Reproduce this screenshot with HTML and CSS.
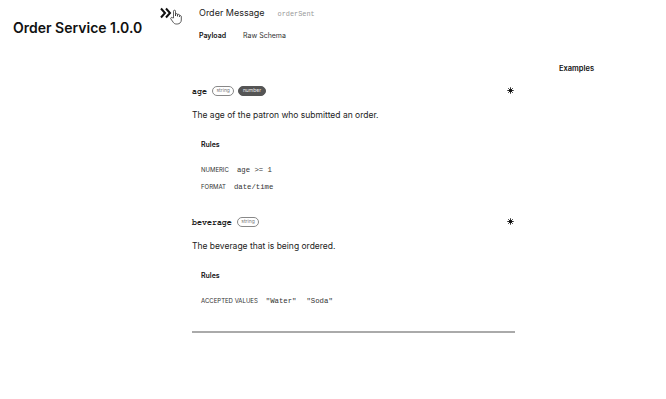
FILE: index.html
```html
<!DOCTYPE html>
<html>
<head>
<meta charset="utf-8">
<link rel="stylesheet" href="styles.css">
</head>
<body>
<div class="app">
  <aside class="sidebar">
    <h1 class="service-title">Order Service 1.0.0</h1>
  </aside>
  <main class="main">
    <div class="top">
      <div class="toggle">
        <svg width="13" height="12" viewBox="0 0 13 12" class="chev">
          <path d="M1 1.5 L5 6 L1 10.5 M6 1.5 L10 6 L6 10.5" fill="none" stroke="#111" stroke-width="2"/>
        </svg>
        <svg width="12" height="16" viewBox="0 0 12 16" class="hand">
          <path d="M3.5 9 V2.2 a1 1 0 0 1 2 0 V7 V5.6 a1 1 0 0 1 2 0 V7.3 V6.3 a1 1 0 0 1 2 0 V7.8 V7.2 a1 1 0 0 1 1.8 0 V11 c0 2.2 -1.6 4 -4 4 H6.2 c-1.3 0 -2.2 -0.6 -2.9 -1.6 L0.9 10 a1 1 0 0 1 1.5 -1.3 Z" fill="#fff" stroke="#333" stroke-width="0.8"/>
        </svg>
      </div>
      <div class="head">
        <div class="msg-row">
          <span class="msg-name">Order Message</span>
          <span class="msg-id">orderSent</span>
        </div>
        <div class="tabs">
          <span class="tab active">Payload</span>
          <span class="tab">Raw Schema</span>
        </div>
      </div>
    </div>
    <div class="body">
      <section class="content">
        <div class="prop">
          <div class="prop-head">
            <span class="prop-name">age</span>
            <span class="badge outline">string</span>
            <span class="badge filled">number</span>
            <svg class="req" width="7" height="7" viewBox="0 0 8 8"><path d="M4 0.3 V7.7 M0.3 4 H7.7 M1.4 1.4 L6.6 6.6 M6.6 1.4 L1.4 6.6" stroke="#111" stroke-width="1"/><circle cx="4" cy="4" r="1.8" fill="#111"/></svg>
          </div>
          <p class="desc">The age of the patron who submitted an order.</p>
          <div class="rules">
            <div class="rules-title">Rules</div>
            <div class="rule"><span class="rule-label">NUMERIC</span><span class="code">age &gt;= 1</span></div>
            <div class="rule"><span class="rule-label">FORMAT</span><span class="code">date/time</span></div>
          </div>
        </div>
        <div class="prop">
          <div class="prop-head">
            <span class="prop-name">beverage</span>
            <span class="badge outline">string</span>
            <svg class="req" width="7" height="7" viewBox="0 0 8 8"><path d="M4 0.3 V7.7 M0.3 4 H7.7 M1.4 1.4 L6.6 6.6 M6.6 1.4 L1.4 6.6" stroke="#111" stroke-width="1"/><circle cx="4" cy="4" r="1.8" fill="#111"/></svg>
          </div>
          <p class="desc">The beverage that is being ordered.</p>
          <div class="rules">
            <div class="rules-title">Rules</div>
            <div class="rule"><span class="rule-label">ACCEPTED VALUES</span><span class="code">"Water"</span><span class="code">"Soda"</span></div>
          </div>
        </div>
        <hr class="divider">
      </section>
      <aside class="examples">
        <div class="examples-title">Examples</div>
      </aside>
    </div>
  </main>
</div>
</body>
</html>
```

FILE: styles.css
```css
* { box-sizing: border-box; }
html, body { margin: 0; padding: 0; background: #fff; }
body { font-family: Inter, "Noto Sans", sans-serif; color: #2a2a2a; }
.app { display: flex; width: 666px; height: 399px; }
.sidebar { width: 155px; padding: 19px 0 0 13px; flex: none; }
.service-title { margin: 0; font-size: 14px; font-weight: 600; color: #111; }
.main { flex: 1; display: flex; flex-direction: column; }
.top { display: flex; padding-top: 6px; }
.toggle { width: 44px; padding-left: 5px; display: flex; align-items: flex-start; position: relative; }
.chev { margin-top: 1px; }
.hand { position: absolute; left: 15px; top: 3px; }
.head { display: flex; flex-direction: column; }
.msg-row { display: flex; align-items: baseline; gap: 13px; height: 14px; padding-top: 1px; }
.msg-name { font-size: 9px; color: #222; }
.msg-id { font-family: "Liberation Mono", monospace; font-size: 6.9px; color: #999; }
.tabs { display: flex; gap: 17px; margin-top: 11px; }
.tab { font-size: 7px; color: #333; }
.tab.active { font-weight: 600; color: #111; }
.body { display: flex; margin-top: 19px; }
.content { width: 323px; margin-left: 37px; padding-top: 26px; }
.prop-head { display: flex; align-items: center; gap: 4px; height: 12px; position: relative; }
.prop-name { font-family: "Nimbus Mono PS", "FreeMono", "Courier New", "Courier", "Liberation Mono", monospace; font-weight: 700; font-size: 8.3px; color: #222; margin-right: 1px; }
.badge { font-size: 5px; border-radius: 6px; padding: 1px 3.5px; line-height: 5.5px; }
.badge.outline { border: 0.8px solid #888; color: #777; }
.badge.filled { background: #555; color: #eee; border: 0.8px solid #555; }
.req { position: absolute; right: 1px; top: 2px; }
.desc { margin: 13px 0 0; font-size: 8.5px; color: #222; }
.rules { padding: 20px 9px 0; }
.rules-title { font-size: 7px; font-weight: 600; color: #111; margin-bottom: 17px; }
.rule { display: flex; align-items: baseline; gap: 8px; margin-bottom: 9px; }
.rule-label { font-size: 6px; color: #333; }
.code { font-family: "Liberation Mono", monospace; font-size: 7.3px; color: #333; }
.rule .code + .code { margin-left: 2px; }
.prop + .prop { margin-top: 25px; }
.divider { margin: 26px 0 0; border: 0; height: 2px; background: #aaa; }
.examples { padding: 5px 0 0 44px; }
.examples-title { font-size: 7.5px; font-weight: 600; color: #111; }
```
